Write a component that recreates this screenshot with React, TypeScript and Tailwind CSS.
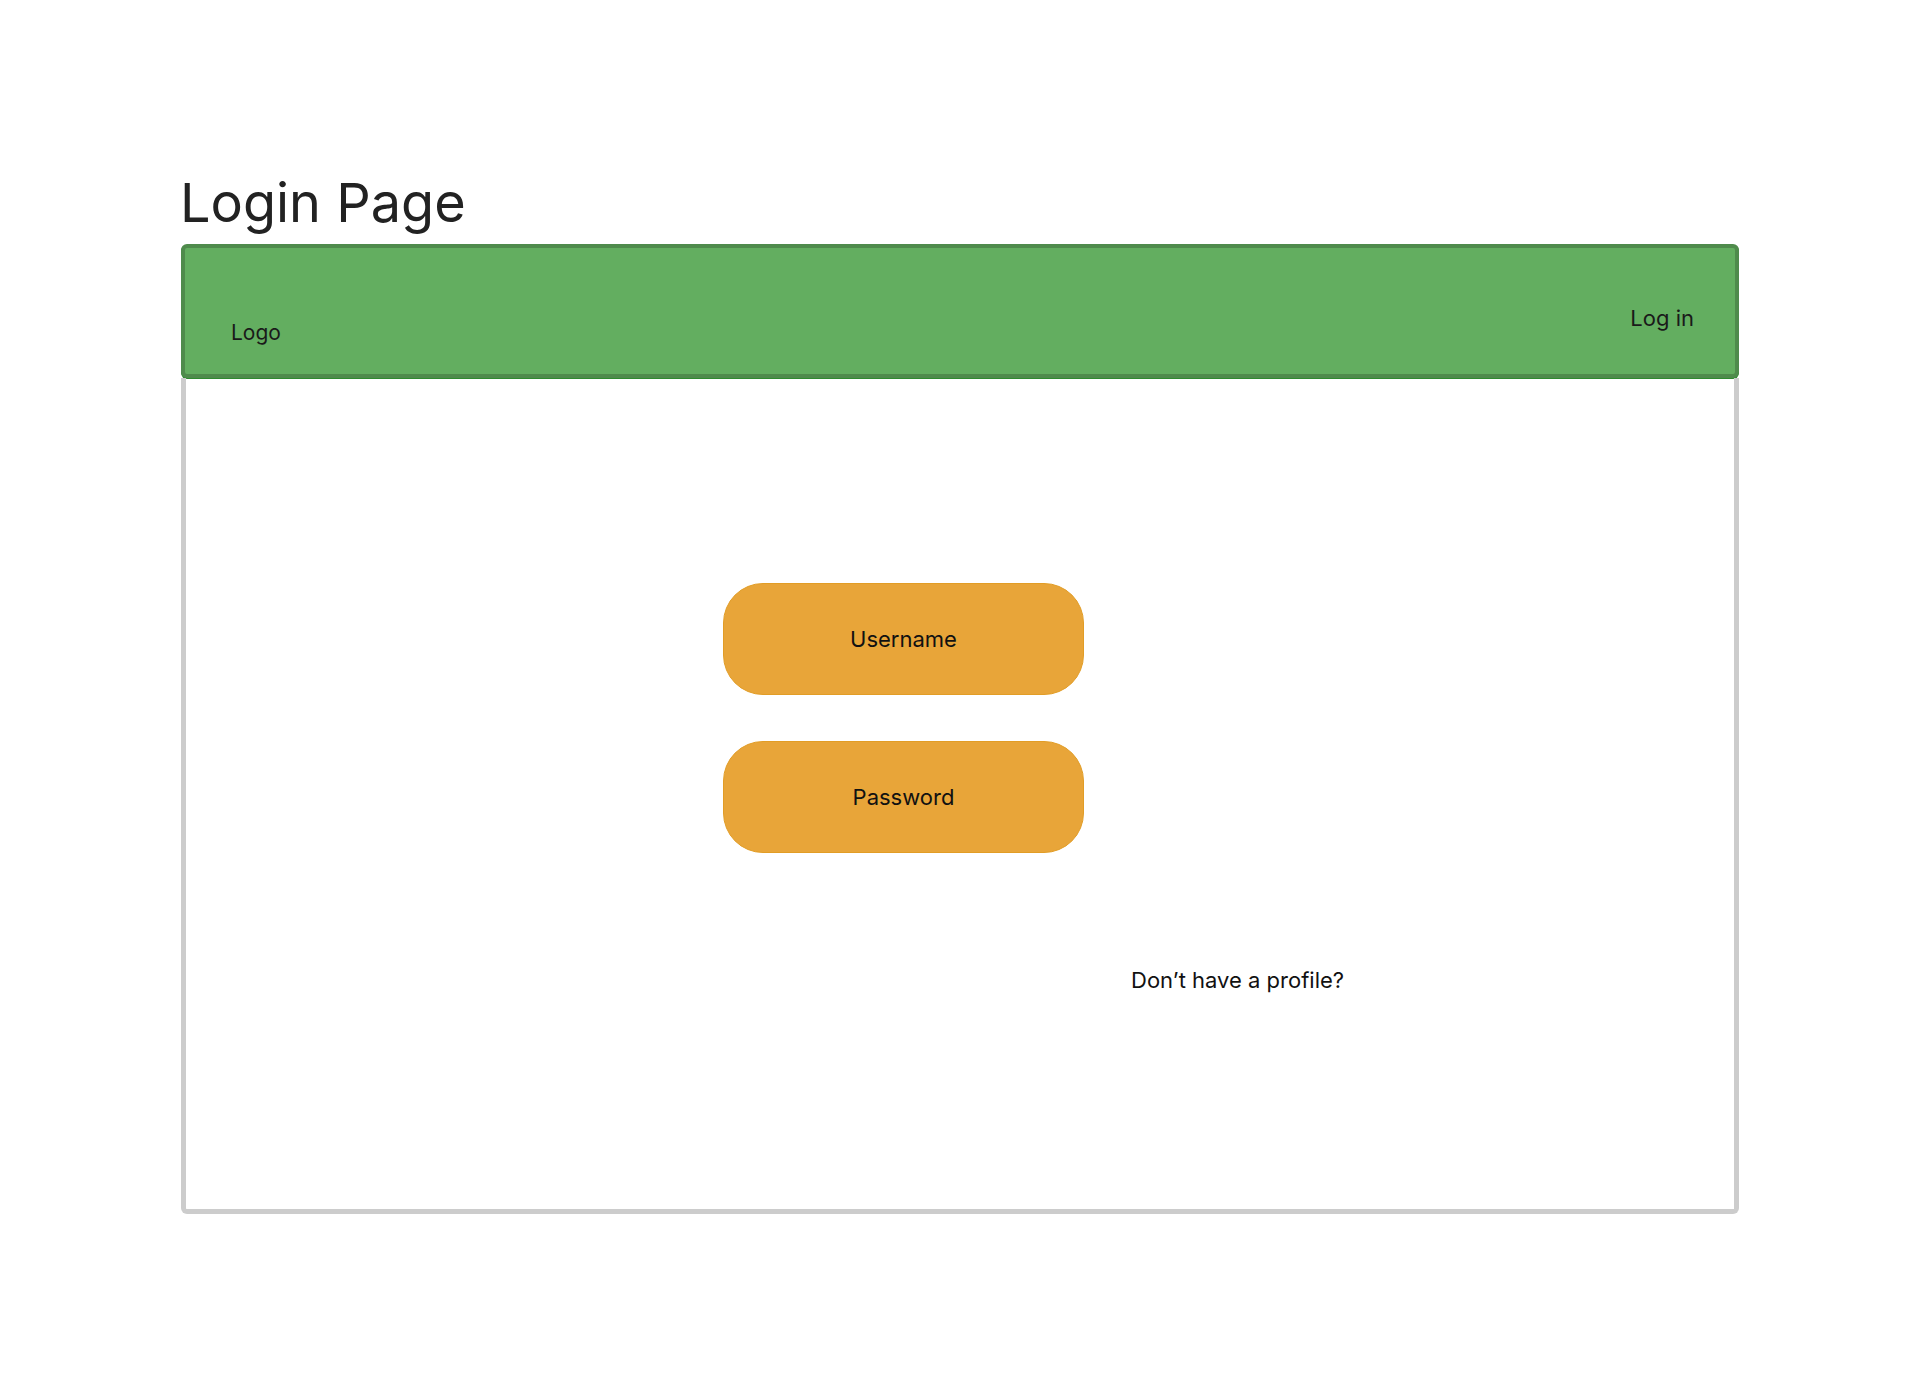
import React from "react";

const font = { fontFamily: "Inter, 'Noto Sans', sans-serif" };

const Field = ({ label }: { label: string }) => {
  return (
    <div className="w-[361px] h-[112px] rounded-[40px] bg-[#e8a539] border border-[#e29d26] flex items-center justify-center text-[22px] leading-[27px] text-[#111]">
      {label}
    </div>
  );
};

export default function App() {
  return (
    <div className="w-full min-h-[1396px] bg-white pt-[169px] pl-[181px]" style={font}>
      {/* Title */}
      <h1 className="text-[54px] leading-[68px] text-[#222] mb-[7px] -ml-[1px]">Login Page</h1>

      {/* Frame */}
      <div className="w-[1558px] flex flex-col">
        {/* Header */}
        <div className="h-[134px] bg-[#63ae60] border-4 border-[#4f8b4c] rounded-[6px] flex justify-between items-start pl-[46px] pr-[41px] text-[#1a1a1a] shadow-[0_1px_0_#2f8a2f]">
          <span className="mt-[73px] text-[21px] leading-[24px]">Logo</span>
          <span className="mt-[58px] text-[22px] leading-[24px]">Log in</span>
        </div>

        {/* Body */}
        <div className="h-[836px] border-x-[5px] border-b-[5px] border-[#cccccc] rounded-b-[6px] pt-[205px] pl-[537px] flex flex-col items-start">
          <Field label="Username" />
          <div className="mt-[46px]">
            <Field label="Password" />
          </div>
          <p className="mt-[114px] ml-[408px] text-[22px] leading-[27px] text-[#111]">Don’t have a profile?</p>
        </div>
      </div>
    </div>
  );
}
